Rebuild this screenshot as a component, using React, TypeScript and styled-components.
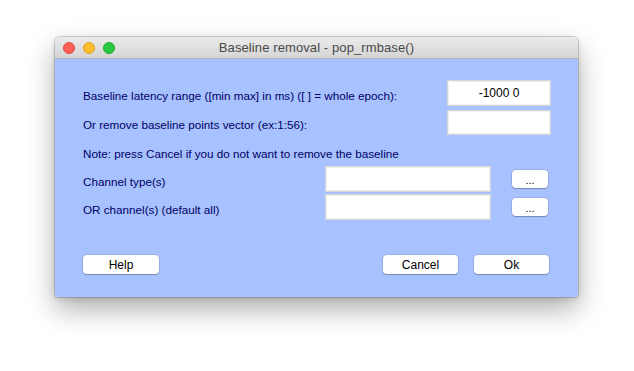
import React from "react";
import styled, { createGlobalStyle } from "styled-components";

const Global = createGlobalStyle`
  html, body { margin: 0; padding: 0; background: #ffffff; }
  body { font-family: "Liberation Sans", Arial, sans-serif; }
`;

const Page = styled.div`
  width: 634px;
  height: 371px;
  padding: 37px 0 0 55px;
  box-sizing: border-box;
`;

const Window = styled.div`
  width: 523px;
  height: 260px;
  border-radius: 5px 5px 3px 3px;
  overflow: hidden;
  box-shadow: 0 0 0 1px rgba(0, 0, 0, 0.16), 0 12px 28px rgba(0, 0, 0, 0.32),
    0 2px 6px rgba(0, 0, 0, 0.12);
  display: flex;
  flex-direction: column;
`;

const TitleBar = styled.div`
  height: 22px;
  flex: none;
  box-sizing: border-box;
  background: linear-gradient(#ebebeb, #d5d5d5);
  border-bottom: 1px solid #b5b5b5;
  display: grid;
  grid-template-columns: 1fr auto 1fr;
  align-items: center;
  padding: 0 8px;
`;

const Lights = styled.div`
  display: flex;
  gap: 8px;
  align-items: center;
`;

const Light = styled.span<{ $fill: string; $edge: string }>`
  width: 12px;
  height: 12px;
  border-radius: 50%;
  box-sizing: border-box;
  background: ${(p) => p.$fill};
  border: 1px solid ${(p) => p.$edge};
`;

const Title = styled.div`
  font-size: 13px;
  color: #4a4a4a;
  letter-spacing: 0.1px;
`;

const Body = styled.div`
  flex: 1;
  background: #a8c1ff;
  padding: 0 27px 0 28px;
  display: flex;
  flex-direction: column;
`;

const Row = styled.div<{ $top: number; $h: number }>`
  margin-top: ${(p) => p.$top}px;
  height: ${(p) => p.$h}px;
  display: flex;
  align-items: flex-start;
`;

const Label = styled.div<{ $off: number }>`
  flex: 1;
  padding-top: ${(p) => p.$off}px;
  font-size: 11.7px;
  line-height: 14px;
  color: #000066;
  white-space: nowrap;
`;

const Field = styled.div<{ $w: number; $h: number }>`
  width: ${(p) => p.$w}px;
  height: ${(p) => p.$h}px;
  box-sizing: border-box;
  background: #ffffff;
  border: 1px solid #d6d6d6;
  box-shadow: inset 0 0 0 1px #f0f0f0;
  display: flex;
  align-items: center;
  justify-content: center;
  font-size: 12px;
  color: #000000;
`;

const SmallButton = styled.div`
  width: 36px;
  height: 18px;
  margin: 4px 3px 0 21px;
  box-sizing: border-box;
  background: #ffffff;
  border-radius: 4px;
  box-shadow: 0 0 0 0.5px rgba(0, 0, 0, 0.18), 0 1px 1px rgba(0, 0, 0, 0.22);
  display: flex;
  align-items: center;
  justify-content: center;
  font-size: 11px;
  line-height: 1;
  color: #000;
  padding-top: 2px;
`;

const Footer = styled.div`
  margin-top: 35px;
  display: flex;
  align-items: center;
  padding-right: 2px;
`;

const Spacer = styled.div`
  flex: 1;
`;

const Button = styled.div<{ $w: number }>`
  width: ${(p) => p.$w}px;
  height: 19px;
  box-sizing: border-box;
  background: #ffffff;
  border-radius: 4px;
  box-shadow: 0 0 0 0.5px rgba(0, 0, 0, 0.18), 0 1px 1px rgba(0, 0, 0, 0.22);
  display: flex;
  align-items: center;
  justify-content: center;
  font-size: 12px;
  color: #000;
`;

const ButtonGap = styled.div`
  width: 16px;
`;

export default function App() {
  return (
    <>
      <Global />
      <Page>
        <Window>
          <TitleBar>
            <Lights>
              <Light $fill="#fe5f57" $edge="#e2463f" />
              <Light $fill="#febc2e" $edge="#dea123" />
              <Light $fill="#28c840" $edge="#1aab29" />
            </Lights>
            <Title>Baseline removal - pop_rmbase()</Title>
            <div />
          </TitleBar>
          <Body>
            <Row $top={21} $h={26}>
              <Label $off={9}>
                Baseline latency range ([min max] in ms) ([ ] = whole epoch):
              </Label>
              <Field $w={104} $h={26}>-1000 0</Field>
            </Row>
            <Row $top={4} $h={25}>
              <Label $off={8}>Or remove baseline points vector (ex:1:56):</Label>
              <Field $w={104} $h={25} />
            </Row>
            <Row $top={12} $h={14}>
              <Label $off={0}>
                Note: press Cancel if you do not want to remove the baseline
              </Label>
            </Row>
            <Row $top={5} $h={26}>
              <Label $off={9}>Channel type(s)</Label>
              <Field $w={166} $h={26} />
              <SmallButton>...</SmallButton>
            </Row>
            <Row $top={2} $h={26}>
              <Label $off={9}>OR channel(s) (default all)</Label>
              <Field $w={166} $h={26} />
              <SmallButton>...</SmallButton>
            </Row>
            <Footer>
              <Button $w={76}>Help</Button>
              <Spacer />
              <Button $w={75}>Cancel</Button>
              <ButtonGap />
              <Button $w={75}>Ok</Button>
            </Footer>
          </Body>
        </Window>
      </Page>
    </>
  );
}
